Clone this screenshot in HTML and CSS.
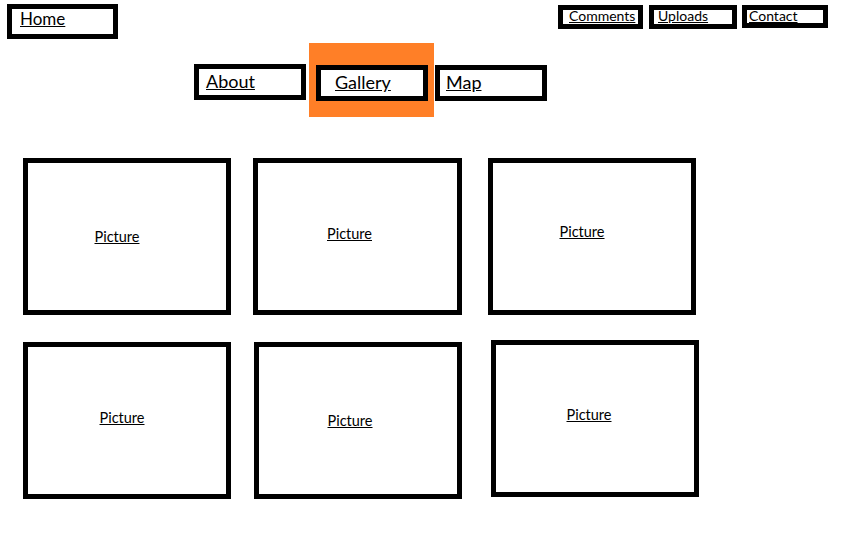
FILE: index.html
```html
<!DOCTYPE html>
<html lang="en">
<head>
  <meta charset="UTF-8" />
  <meta name="viewport" content="width=device-width,initial-scale=1" />
  <title>Gallery</title>
  <link rel="stylesheet" href="styles.css">
</head>
<body>

  <header class="topbar">
    <a class="box home" href="#">Home</a>
    <nav class="util">
      <a class="box util-link comments" href="#">Comments</a>
      <a class="box util-link uploads" href="#">Uploads</a>
      <a class="box util-link contact" href="#">Contact</a>
    </nav>
  </header>

  <nav class="main-nav">
    <a class="box tab about" href="#">About</a>
    <div class="active">
      <a class="box tab gallery-tab" href="#">Gallery</a>
    </div>
    <a class="box tab map" href="#">Map</a>
  </nav>

  <main class="gallery">
    <div class="box pic"><a href="#">Picture</a></div>
    <div class="box pic"><a href="#">Picture</a></div>
    <div class="box pic"><a href="#">Picture</a></div>
    <div class="box pic"><a href="#">Picture</a></div>
    <div class="box pic"><a href="#">Picture</a></div>
    <div class="box pic"><a href="#">Picture</a></div>
  </main>

</body>
</html>
```

FILE: styles.css
```css
body {
  font-family: Lato, "Open Sans", Arial, sans-serif;
  background: #fff;
  color: #000;
  margin: 0;
  padding: 0;
}
a {
  color: #000;
  text-decoration: underline;
}
.box {
  display: block;
  border: 5px solid #000;
  box-sizing: border-box;
  background: #fff;
}

/* top bar */
.topbar {
  display: flex;
  align-items: flex-start;
  padding: 4px 31px 0 7px;
}
.home {
  width: 111px;
  height: 35px;
  padding-left: 8px;
  font-size: 17px;
  line-height: 19px;
}
.util {
  display: flex;
  margin-left: auto;
  margin-top: 1px;
}
.util-link {
  height: 24px;
  font-size: 14px;
  line-height: 12px;
}
.comments {
  width: 85px;
  padding-left: 6px;
}
.uploads {
  width: 88px;
  padding-left: 4px;
  margin-left: 6px;
}
.contact {
  width: 86px;
  height: 23px;
  padding-left: 2px;
  margin-left: 5px;
}

/* main nav */
.main-nav {
  display: flex;
  align-items: flex-start;
  margin-top: 4px;
  padding-left: 194px;
}
.tab {
  width: 112px;
  height: 36px;
  font-size: 18px;
  line-height: 24px;
}
.about {
  margin-top: 21px;
  padding-left: 7px;
}
.active {
  width: 125px;
  height: 74px;
  margin-left: 3px;
  padding: 22px 6px 16px 7px;
  background: #ff7f27;
  box-sizing: border-box;
}
.gallery-tab {
  padding-left: 14px;
}
.map {
  margin-top: 22px;
  margin-left: 1px;
  padding-left: 6px;
}

/* pictures */
.gallery {
  display: grid;
  grid-template-columns: repeat(3, 208px);
  grid-auto-rows: 157px;
  column-gap: 23px;
  row-gap: 27px;
  margin-top: 41px;
  padding-left: 23px;
}
.pic {
  display: flex;
  justify-content: center;
  align-items: center;
  padding: 0 18px 6px 0;
  font-size: 14.5px;
}
.pic:nth-child(1) {
  padding: 0 20px 0 0;
}
.pic:nth-child(2) {
  margin-left: -1px;
  padding: 0 16px 6px 0;
}
.pic:nth-child(3) {
  margin: 0 -3px 0 3px;
  padding: 0 20px 10px 0;
}
.pic:nth-child(4) {
  padding: 0 10px 6px 0;
}
.pic:nth-child(5) {
  padding: 0 16px 0 0;
}
.pic:nth-child(6) {
  margin: -2px -6px 2px 6px;
  padding: 0 12px 8px 0;
}
```
